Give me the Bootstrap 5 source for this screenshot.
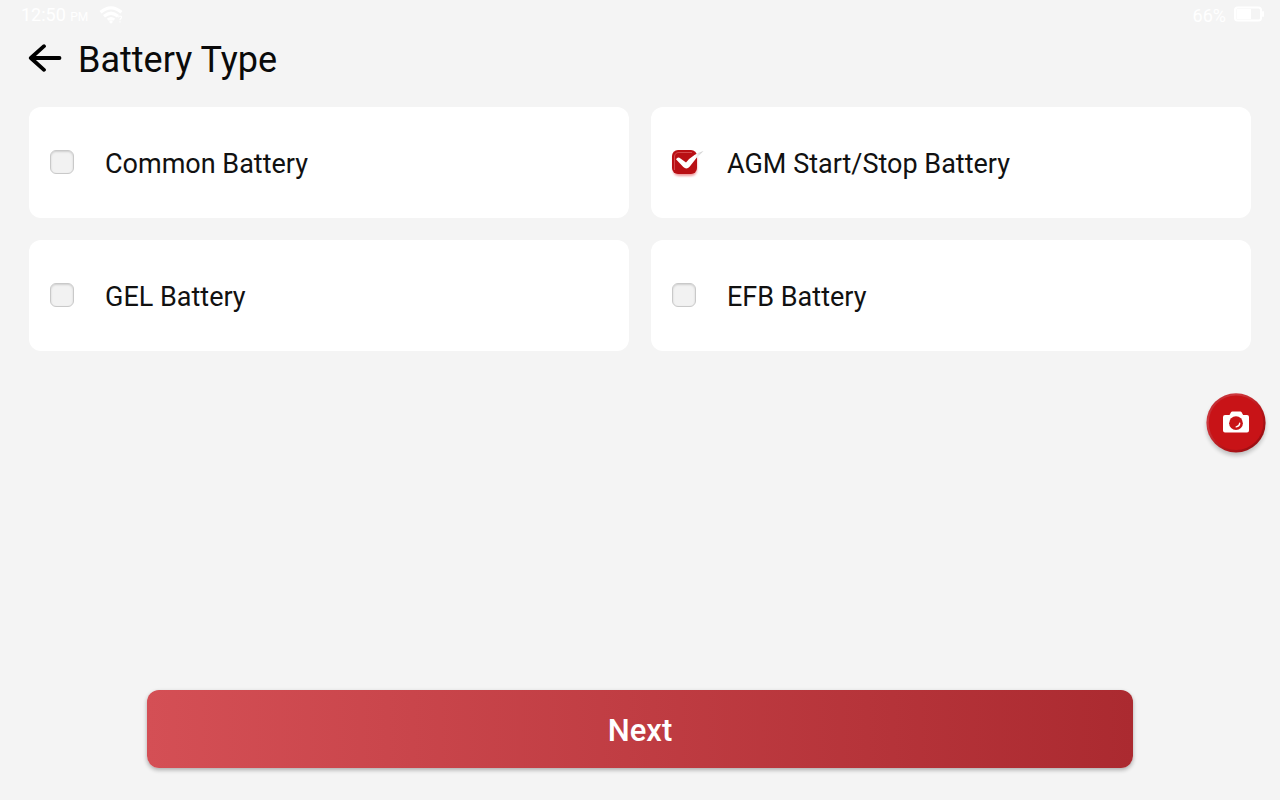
<!DOCTYPE html>
<html lang="en">
<head>
<meta charset="utf-8">
<meta name="viewport" content="width=device-width, initial-scale=1">
<title>Battery Type</title>
<link href="https://cdn.jsdelivr.net/npm/bootstrap@5.3.0/dist/css/bootstrap.min.css" rel="stylesheet">
<style>
  body { background: #f4f4f4; font-family: Roboto, "Liberation Sans", sans-serif; color: #111; }
  .status-bar { height: 32px; padding: 0 16px 0 21px; font-size: 18px; line-height: 32px; color: #fff; }
  .status-bar .meridiem { font-size: 12px; }
  .page-head { height: 56px; padding: 0 28px; gap: 16px; }
  .page-head h1 { font-size: 36px; line-height: 56px; color: #0a0a0a; }
  .back-btn { line-height: 0; }
  .choices { padding: 19px 29px 0; }
  .choices .row { --bs-gutter-x: 22px; --bs-gutter-y: 22px; }
  .choice { height: 111px; padding: 0 21px 1px; gap: 31px; border-radius: 12px; background: #fff; cursor: pointer; }
  .choice-text { font-size: 27px; line-height: 32px; padding-top: 4px; }
  .tick { width: 24px; height: 24px; }
  .tick .form-check-input { width: 24px; height: 24px; margin: 0; border: 1px solid #c9c9c9; border-radius: 6px; background: #f2f2f2; box-shadow: inset 0 1px 2px #cfcfcf; }
  .tick .form-check-input:checked { background: transparent; border-color: transparent; box-shadow: none; }
  .tick svg { display: none; left: -4px; top: -4px; pointer-events: none; }
  .tick .form-check-input:checked + svg { display: block; }
  .page-foot { padding: 0 0 32px; }
  .next-btn { width: 77%; height: 78px; padding: 4px 0 0; border: 0; border-radius: 12px; color: #fff; font-size: 31px; font-weight: 500; line-height: 36px; background: linear-gradient(90deg, #d44f55, #ab2a30); box-shadow: 0 2px 4px rgba(0,0,0,.3); }
  .next-btn:hover { color: #fff; }
  .camera-btn { right: 10px; top: 389px; line-height: 0; }
</style>
</head>
<body class="d-flex flex-column min-vh-100">
<div class="status-bar d-flex justify-content-between">
  <div class="d-flex align-items-center">
    <span>12:50 <span class="meridiem">PM</span></span>
    <svg class="ms-2" width="30" height="20" viewBox="0 0 30 20" aria-hidden="true">
      <path d="M3.500 5Q15-4.500 26.500 5L24.500 7.600Q15-.6 5.500 7.600ZM7 9Q15 2 23 9L21 11.500Q15 6.400 9 11.500ZM10.800 12.800Q15 9.200 19.200 12.800L17.200 14.800Q15 13.200 12.800 14.800Z" fill="#fff"/>
      <circle cx="15" cy="15.800" r="1.600" fill="#fff"/>
      <path d="M22.500 11.500q.2-1.600 1.600-1.500 1.600.2 1.400 1.500-.2.700-1 1.200-.6.400-.5 1.600M24 15.300v1.200" fill="none" stroke="#fff" stroke-width="1.200"/>
    </svg>
  </div>
  <div class="d-flex align-items-center gap-2">
    <span>66%</span>
    <svg class="mb-1" width="30" height="16" viewBox="0 0 30 16" aria-hidden="true">
      <rect x="1" y="1.500" width="26" height="13" rx="2.500" fill="none" stroke="#fff" stroke-width="2"/>
      <rect x="2.500" y="3" width="14.500" height="10" fill="#fff"/><rect x="28" y="5" width="2" height="6" rx="1" fill="#fff"/>
    </svg>
  </div>
</div>

<header class="page-head d-flex align-items-center">
  <button type="button" class="back-btn btn border-0 p-0" aria-label="Back">
    <svg width="34" height="32" viewBox="0 0 34 32"><path d="M16 2.200 2.800 14 16 25.800M3 14h28.500" fill="none" stroke="#000" stroke-width="3.800" stroke-linecap="round" stroke-linejoin="round"/></svg>
  </button>
  <h1 class="fw-normal m-0">Battery Type</h1>
</header>

<main class="choices flex-grow-1">
  <div class="row row-cols-2">
    <div class="col">
      <label class="choice d-flex align-items-center" for="common">
        <span class="tick position-relative flex-shrink-0"><input class="form-check-input d-block" type="checkbox" id="common"><svg class="position-absolute" width="36" height="36"><use href="#tick-art"/></svg></span>
        <span class="choice-text">Common Battery</span>
      </label>
    </div>
    <div class="col">
      <label class="choice d-flex align-items-center" for="agm">
        <span class="tick position-relative flex-shrink-0"><input class="form-check-input d-block" type="checkbox" id="agm" checked><svg class="position-absolute" width="36" height="36"><use href="#tick-art"/></svg></span>
        <span class="choice-text">AGM Start/Stop Battery</span>
      </label>
    </div>
    <div class="col">
      <label class="choice d-flex align-items-center" for="gel">
        <span class="tick position-relative flex-shrink-0"><input class="form-check-input d-block" type="checkbox" id="gel"><svg class="position-absolute" width="36" height="36"><use href="#tick-art"/></svg></span>
        <span class="choice-text">GEL Battery</span>
      </label>
    </div>
    <div class="col">
      <label class="choice d-flex align-items-center" for="efb">
        <span class="tick position-relative flex-shrink-0"><input class="form-check-input d-block" type="checkbox" id="efb"><svg class="position-absolute" width="36" height="36"><use href="#tick-art"/></svg></span>
        <span class="choice-text">EFB Battery</span>
      </label>
    </div>
  </div>
</main>

<footer class="page-foot d-flex justify-content-center">
  <button type="button" class="next-btn btn">Next</button>
</footer>

<button type="button" class="camera-btn btn border-0 p-0 position-fixed" aria-label="Take screenshot">
  <svg width="68" height="72" viewBox="0 0 68 72">
    <defs>
      <filter id="soft" x="-20%" y="-20%" width="140%" height="140%"><feGaussianBlur stdDeviation="2"/></filter>
      <linearGradient id="rim" x1="0" y1="0" x2="1" y2="1"><stop offset="0" stop-color="#b0161b"/><stop offset=".25" stop-color="#cf3a40"/><stop offset=".6" stop-color="#b51519"/><stop offset="1" stop-color="#8f0c10"/></linearGradient>
    </defs>
    <circle cx="34" cy="37" r="29.500" fill="#000" opacity=".22" filter="url(#soft)"/>
    <circle cx="34" cy="33.800" r="29.600" fill="url(#rim)"/>
    <circle cx="34" cy="33.800" r="27.300" fill="#c81317"/>
    <path d="M23 26h4.500l1.500-2.700q.4-.8 1.300-.8h8q.9 0 1.300.8l1.500 2.700H45q2 0 2 2v13.500q0 2-2 2H23q-2 0-2-2V28q0-2 2-2z" fill="#fff"/>
    <circle cx="34" cy="34.200" r="6.900" fill="#c81317"/>
    <path d="M37.700 34.200q-.2 3.200-3.500 3.700" fill="none" stroke="#fff" stroke-width="1.400" stroke-linecap="round"/>
  </svg>
</button>

<svg width="0" height="0" class="position-absolute" aria-hidden="true">
  <defs>
    <filter id="glow" x="-30%" y="-30%" width="160%" height="160%"><feGaussianBlur stdDeviation="1.300"/></filter>
    <linearGradient id="tail" gradientUnits="userSpaceOnUse" x1="27" y1="0" x2="34" y2="0"><stop offset="0" stop-color="#fff"/><stop offset="1" stop-color="#d0d0d0"/></linearGradient>
    <g id="tick-art">
      <rect x="5" y="7" width="24" height="23" rx="6" fill="#e0343a" opacity=".5" filter="url(#glow)"/>
      <rect x="4" y="4" width="25" height="24" rx="6" fill="#b90f14"/>
      <path d="M6.500 24V11q0-4.500 4.500-4.500h13" fill="none" stroke="#d4474a" stroke-width="1"/>
      <path d="M8 13.200q1.800-3 4.500-.8l5.500 4Q25 8 35.500 5 28 11.500 21.800 20.500q-3.200 3.600-6.500.6z" fill="url(#tail)"/>
    </g>
  </defs>
</svg>
<script src="https://cdn.jsdelivr.net/npm/bootstrap@5.3.0/dist/js/bootstrap.bundle.min.js"></script>
</body>
</html>
